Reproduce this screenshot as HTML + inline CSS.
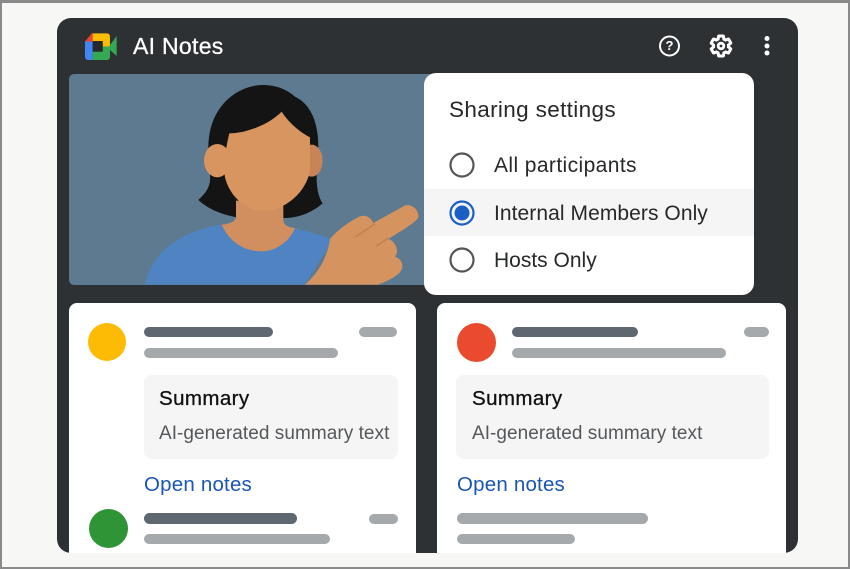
<!DOCTYPE html>
<html><head><meta charset="utf-8"><style>
html,body{margin:0;padding:0}
body{width:850px;height:569px;overflow:hidden;position:relative;background:#f7f7f5;font-family:"Liberation Sans",sans-serif}
.a{position:absolute}
.t{position:absolute;white-space:nowrap;line-height:1}
.b{position:absolute;border-radius:6px;height:10px}
.d{background:#5f6871}.l{background:#a5a9ac}
.card{position:absolute;top:303px;height:250px;background:#fff;border-radius:8px 8px 0 0}
.box{position:absolute;top:375px;height:84px;background:#f5f5f5;border-radius:8px}
.sum{font-size:20.5px;letter-spacing:.4px;color:#111;-webkit-text-stroke:.3px #111;top:389px}
.ai{font-size:19px;letter-spacing:.05px;color:#55585b;top:424px}
.op{font-size:20.5px;letter-spacing:.2px;color:#1a56b4;top:475px}
.opt{font-size:21px;color:#26282a;left:494px}
</style></head><body>
<div class="a" style="left:0;top:0;width:850px;height:569px;box-sizing:border-box;border:2px solid #8a8a8a;border-top-width:3px;z-index:9"></div>
<div class="a" style="left:57px;top:18px;width:741px;height:535px;background:#2e3134;border-radius:14px"></div>

<svg class="a" style="left:0;top:0" width="850" height="569" viewBox="0 0 850 569">
<g transform="translate(50 10) scale(.3333)">
<path d="M105 95L128 70V125H105Z" fill="#4285f4"/>
<path d="M105 95L125 70H130V95Z" fill="#ea4335"/>
<path d="M105 95H128V150H115Q105 150 105 140Z" fill="#4285f4"/>
<path d="M128 70H170Q180 70 180 80V110H158V95H128Z" fill="#fbbc04"/>
<path d="M128 125H158V110H180V140Q180 150 170 150H128Z" fill="#34a853"/>
<path d="M178 108L200 78V138L178 118Z" fill="#34a853"/>
<rect x="128" y="93" width="30" height="32" fill="#26282b"/>
</g>
<rect x="69" y="74" width="370" height="211" rx="5" fill="#5d7a90"/>
<g transform="translate(130 74) scale(.3333)">
<path d="M45 632C60 540 150 470 275 452L495 462L610 495L525 632Z" fill="#4f83c1"/>
<path d="M205 378C230 355 243 335 240 305L235 220C235 100 320 33 400 33C450 33 480 55 495 68C540 90 565 140 565 220L560 310C560 340 565 370 578 388C540 420 500 432 460 432L320 430C270 420 235 405 205 378Z" fill="#141414"/>
<path d="M318 380V428C318 445 295 450 275 452C300 510 350 532 395 532C440 532 480 500 495 462C475 460 460 455 460 435V380Z" fill="#d18f60"/>
<ellipse cx="262" cy="260" rx="40" ry="50" fill="#d8955f"/>
<ellipse cx="545" cy="260" rx="33" ry="48" fill="#c78457"/>
<path d="M298 178C285 230 280 280 285 310C300 370 350 410 400 410C470 410 530 350 540 290V190C510 175 475 145 455 113C420 150 350 178 298 178Z" fill="#d8955f"/>
<path d="M525 632C560 600 590 560 600 495C620 470 660 440 690 427C710 420 725 435 730 447L820 397C840 385 868 405 865 430C860 445 790 485 775 495C795 500 810 530 795 548C815 555 825 575 810 595C790 615 760 625 745 632Z" fill="#d4935f"/>
<path d="M675 490L735 450M738 516L775 493" stroke="#c4824f" stroke-width="5" fill="none"/>
</g>
<g fill="none" stroke="#fff">
<circle cx="669.500" cy="46" r="9.500" stroke-width="2"/>
<path transform="translate(709 34)" d="M19.43 12.98c.04-.32.07-.64.07-.98s-.03-.66-.07-.98l2.11-1.65c.19-.15.24-.42.12-.64l-2-3.46c-.12-.22-.39-.3-.61-.22l-2.49 1c-.52-.4-1.08-.73-1.69-.98l-.38-2.65C14.46 2.18 14.25 2 14 2h-4c-.25 0-.46.18-.49.42l-.38 2.65c-.61.25-1.17.59-1.69.98l-2.49-1c-.23-.09-.49 0-.61.22l-2 3.46c-.13.22-.07.49.12.64l2.11 1.65c-.04.32-.07.65-.07.98s.03.66.07.98l-2.11 1.65c-.19.15-.24.42-.12.64l2 3.46c.12.22.39.3.61.22l2.49-1c.52.4 1.08.73 1.69.98l.38 2.65c.03.24.24.42.49.42h4c.25 0 .46-.18.49-.42l.38-2.65c.61-.25 1.17-.59 1.69-.98l2.49 1c.23.09.49 0 .61-.22l2-3.46c.12-.22.07-.49-.12-.64l-2.11-1.65z" stroke-width="3"/>
<circle cx="721" cy="46" r="2.800" stroke-width="2.800"/>
</g>
<g fill="#fff"><circle cx="767" cy="38.500" r="2.500"/><circle cx="767" cy="46" r="2.500"/><circle cx="767" cy="53" r="2.500"/></g>
</svg>
<div class="t" style="left:669.500px;top:39px;width:0;font-size:13px;color:#fff;font-weight:bold;display:flex;justify-content:center">?</div>
<div class="t" style="left:133px;top:35px;font-size:23px;letter-spacing:.3px;color:#fff;-webkit-text-stroke:.3px #fff">AI Notes</div>

<div class="a" style="left:424px;top:73px;width:330px;height:222px;background:#fff;border-radius:12px;overflow:hidden">
<div class="a" style="left:0;top:116px;width:330px;height:47px;background:#f5f5f5"></div>
</div>
<div class="t" style="left:449px;top:99px;font-size:22.500px;letter-spacing:.35px;color:#26282a">Sharing settings</div>
<svg class="a" style="left:440px;top:140px" width="50" height="145" viewBox="440 140 50 145">
<circle cx="462" cy="165" r="11.500" fill="none" stroke="#555" stroke-width="2.200"/>
<circle cx="462" cy="213" r="11.500" fill="none" stroke="#1a5fc4" stroke-width="2.200"/>
<circle cx="462" cy="213" r="7.500" fill="#1a5fc4"/>
<circle cx="462" cy="260" r="11.500" fill="none" stroke="#555" stroke-width="2.200"/>
</svg>
<div class="t opt" style="top:155px;letter-spacing:.4px">All participants</div>
<div class="t opt" style="top:203px;letter-spacing:.07px">Internal Members Only</div>
<div class="t opt" style="top:250px">Hosts Only</div>

<div class="card" style="left:69px;width:347px"></div>
<div class="card" style="left:437px;width:349px"></div>

<div class="a" style="left:88px;top:323px;width:38px;height:38px;border-radius:50%;background:#fdbb05"></div>
<div class="b d" style="left:144px;top:327px;width:129px"></div>
<div class="b l" style="left:144px;top:348px;width:194px"></div>
<div class="b l" style="left:359px;top:327px;width:38px"></div>
<div class="box" style="left:144px;width:254px"></div>
<div class="t sum" style="left:159px">Summary</div>
<div class="t ai" style="left:159px">AI-generated summary text</div>
<div class="t op" style="left:144px">Open notes</div>
<div class="a" style="left:88.500px;top:508.500px;width:39px;height:39px;border-radius:50%;background:#2e9436"></div>
<div class="b d" style="left:144px;top:513px;width:153px;height:11px"></div>
<div class="b l" style="left:369px;top:514px;width:29px"></div>
<div class="b l" style="left:144px;top:534px;width:186px"></div>

<div class="a" style="left:456.500px;top:323px;width:39px;height:39px;border-radius:50%;background:#ea4a2e"></div>
<div class="b d" style="left:512px;top:327px;width:126px"></div>
<div class="b l" style="left:512px;top:348px;width:214px"></div>
<div class="b l" style="left:744px;top:327px;width:25px"></div>
<div class="box" style="left:456px;width:313px"></div>
<div class="t sum" style="left:472px">Summary</div>
<div class="t ai" style="left:472px">AI-generated summary text</div>
<div class="t op" style="left:457px">Open notes</div>
<div class="b l" style="left:457px;top:513px;width:191px;height:11px"></div>
<div class="b l" style="left:457px;top:534px;width:118px"></div>
</body></html>
